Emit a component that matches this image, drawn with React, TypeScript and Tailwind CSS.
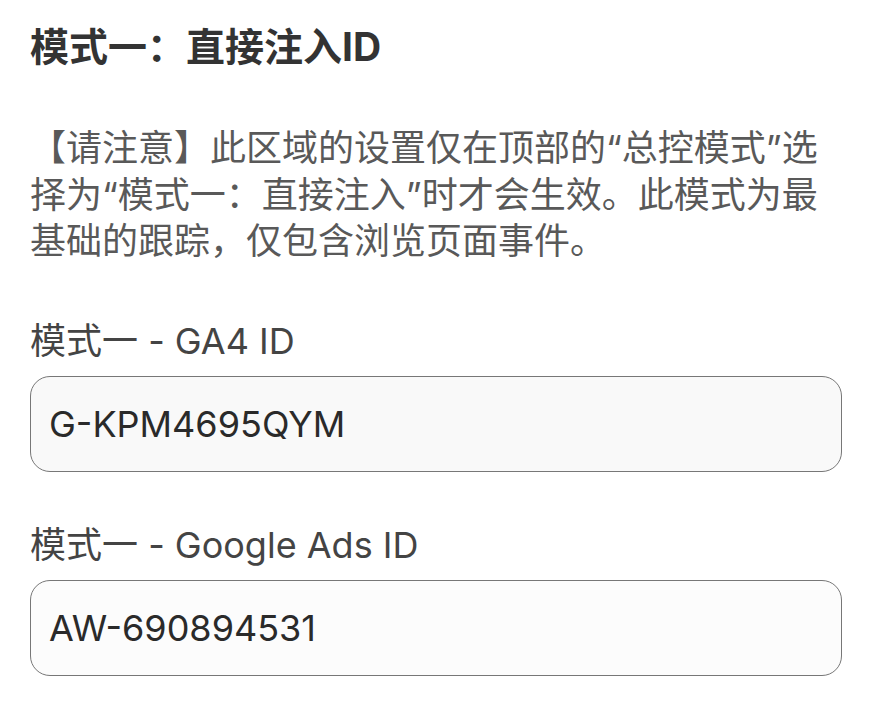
import React from "react"

const font = { fontFamily: 'Inter, "Noto Sans CJK SC", sans-serif' }

const Field = ({ label, value, bg }: { label: string; value: string; bg: string }) => (
    <div className="flex flex-col">
        <label className="text-[36px] leading-[46px] text-[#444444]">{label}</label>
        <input
            readOnly
            value={value}
            className={`mt-[12px] h-[96px] w-full rounded-[20px] border border-[#777777] px-[18px] text-[36px] text-[#2a2a2a] outline-none ${bg}`}
            style={font}
        />
    </div>
)

export default function App() {
    return (
        <div className="min-h-screen bg-white pl-[30px] pr-[39px] pt-[23px]" style={font}>
            <h3 className="text-[39px] font-bold leading-[48px] text-[#333333]">模式一：直接注入ID</h3>

            <p className="mt-[54px] text-[36px] leading-[46.5px] text-[#595959]">
                【请注意】此区域的设置仅在顶部的“总控模式”选择为“模式一：直接注入”时才会生效。此模式为最基础的跟踪，仅包含浏览页面事件。
            </p>

            <div className="mt-[53px]">
                <Field label="模式一 - GA4 ID" value="G-KPM4695QYM" bg="bg-[#f9f9f9]" />
            </div>
            <div className="mt-[50px]">
                <Field label="模式一 - Google Ads ID" value="AW-690894531" bg="bg-[#fcfcfc]" />
            </div>
        </div>
    )
}
